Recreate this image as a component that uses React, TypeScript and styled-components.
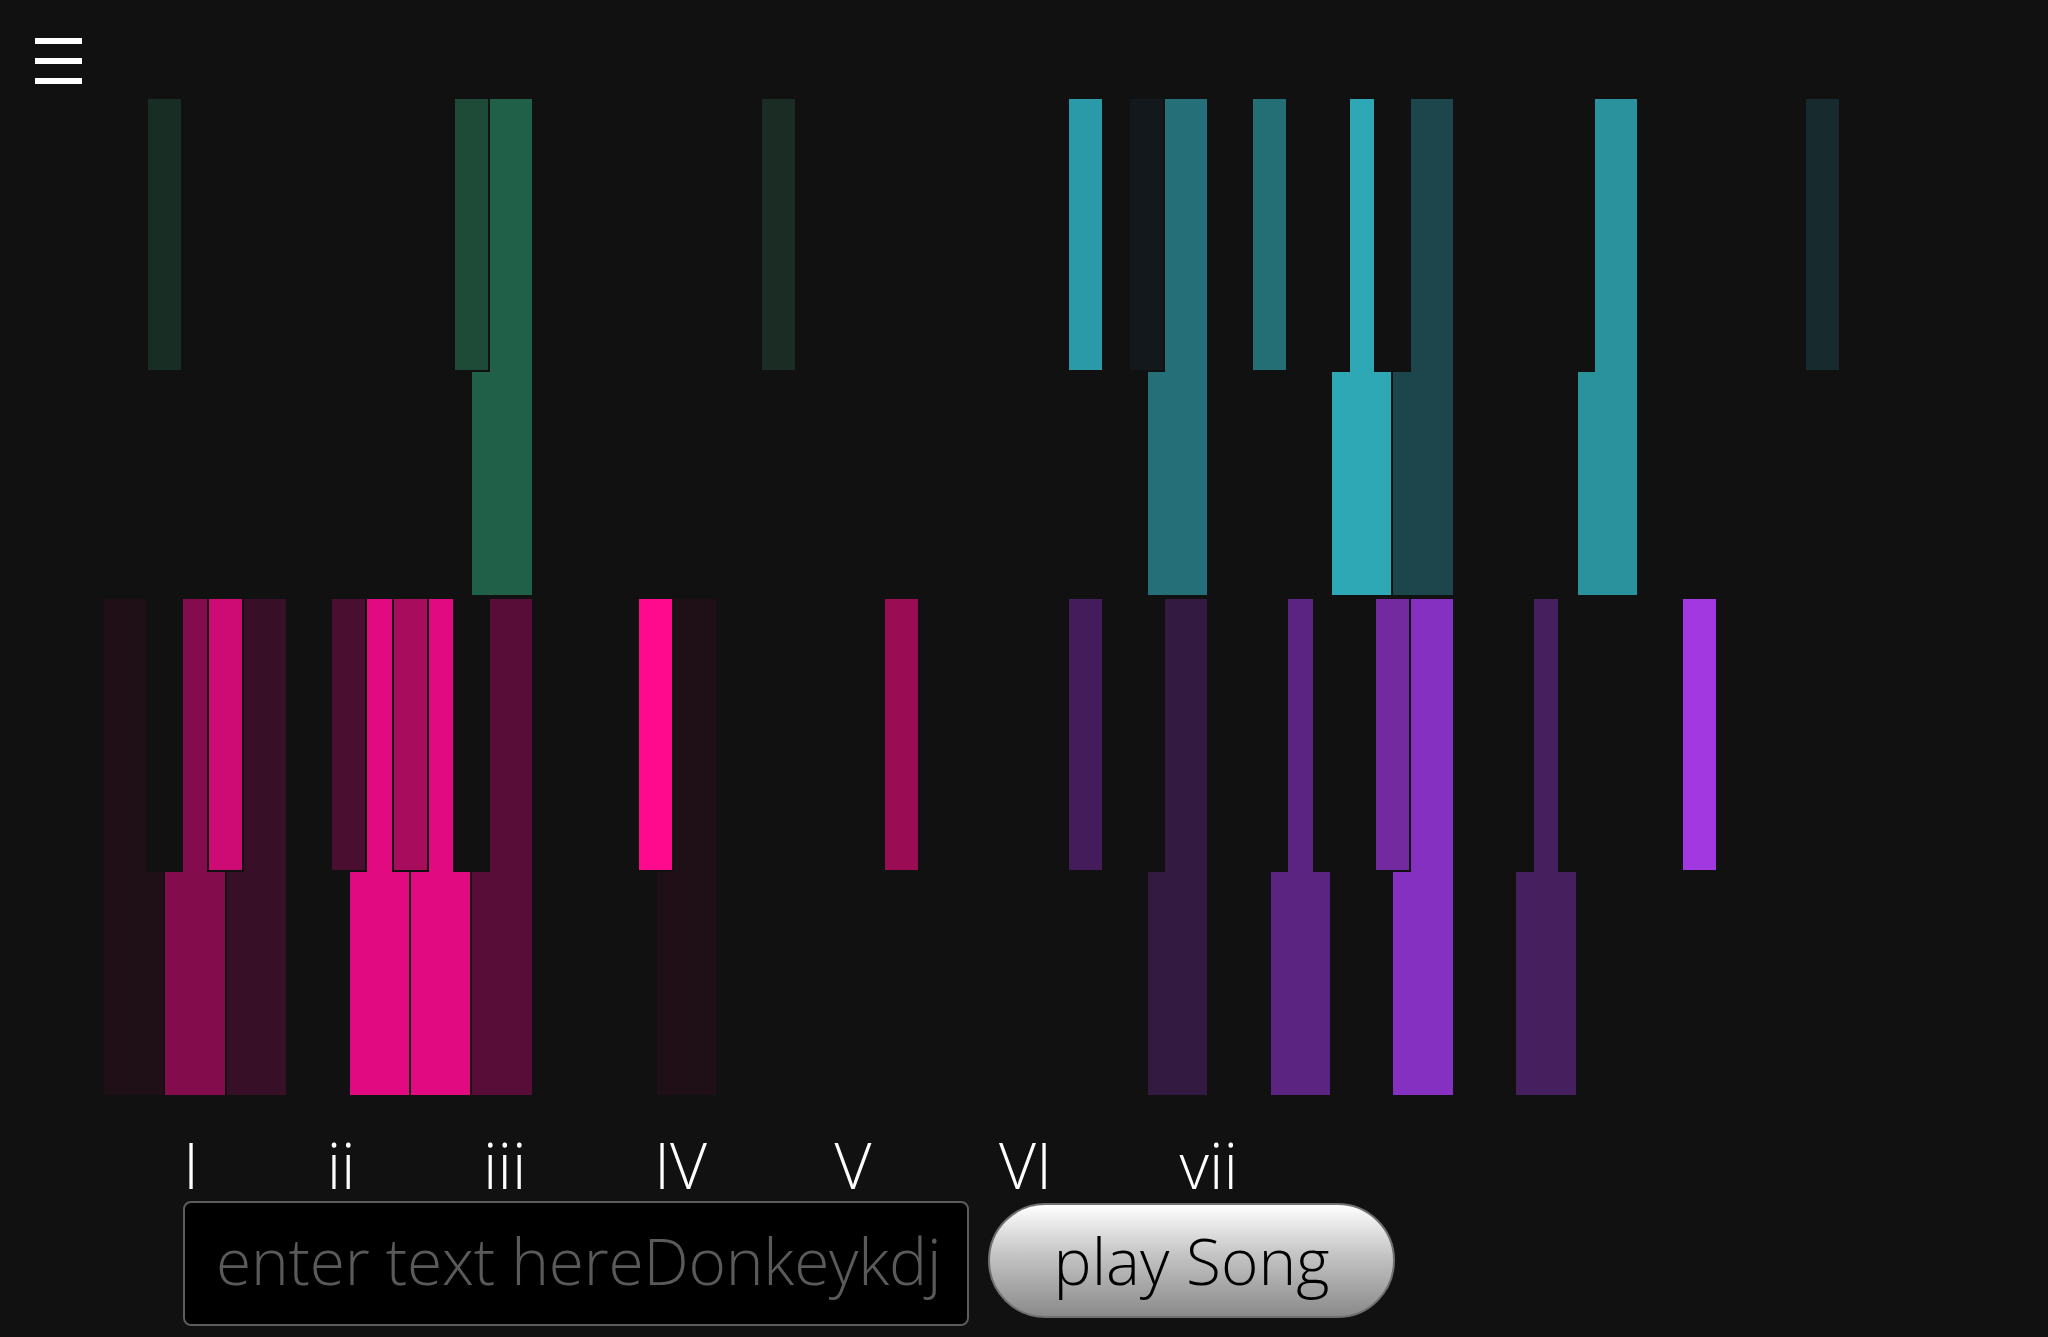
import React from "react";
import styled, { createGlobalStyle } from "styled-components";

//#region constants
const KEY_W = 61.4;
const WHITE_COUNT = 30;
const KEY_H = 496;
const BLACK_H = 271;
const BLACK_W = 33;
const BORDER = 2;
const BG = "#111111";

// boundaries between white keys that carry a black key
const BLACK_SLOTS = [
  1, 2, 4, 5, 6, 8, 9, 11, 12, 13, 16, 17, 19, 20, 21, 23, 24, 26, 27, 28,
];

const CHORDS = ["I", "ii", "iii", "IV", "V", "VI", "vii"];
//#endregion

//#region types
type KeyColors = Record<number, string>;

type KeyboardProps = {
  whites: KeyColors;
  blacks: KeyColors;
};
//#endregion

const TREBLE: KeyboardProps = {
  whites: {
    6: "#206048",
    17: "#257078",
    20: "#2fa8b5",
    21: "#1c454c",
    24: "#2a929c",
  },
  blacks: {
    1: "#182e25",
    6: "#1e4a38",
    11: "#1a2c24",
    16: "#2b9aa8",
    17: "#12181b",
    19: "#246e76",
    28: "#172a2e",
  },
};

const BASS: KeyboardProps = {
  whites: {
    0: "#1f1017",
    1: "#820c4c",
    2: "#370f26",
    4: "#e20a80",
    5: "#e20a80",
    6: "#580c38",
    9: "#1f1017",
    17: "#331a40",
    19: "#5a2480",
    21: "#8530c0",
    23: "#46205e",
  },
  blacks: {
    2: "#cc0c74",
    4: "#4a0f30",
    5: "#a80c5c",
    9: "#ff0a8c",
    13: "#9a0c54",
    16: "#441c5c",
    21: "#722a9e",
    26: "#a238e0",
  },
};

//#region Styles
const GlobalStyle = createGlobalStyle`
  html, body {
    margin: 0;
    background: ${BG};
  }
  body {
    font-family: "Open Sans", "Noto Sans", sans-serif;
    font-weight: 300;
    color: #ffffff;
  }
`;

const Page = styled.div`
  min-height: 100vh;
  display: flex;
  flex-direction: column;
`;

const Header = styled.header`
  height: 99px;
  box-sizing: border-box;
  padding: 38px 0 0 35px;
`;

const MenuButton = styled.button`
  display: flex;
  flex-direction: column;
  gap: 14px;
  width: 47px;
  padding: 0;
  border: 0;
  background: none;
  cursor: pointer;
`;

const MenuBar = styled.span`
  display: block;
  width: 47px;
  height: 6px;
  background: #ffffff;
`;

const Keyboards = styled.div`
  display: flex;
  flex-direction: column;
  gap: 4px;
  padding-left: 103px;
`;

const KeyboardSvg = styled.svg`
  display: block;
  shape-rendering: crispEdges;
`;

const Controls = styled.div`
  margin: 38px 0 0 183px;
`;

const ChordRow = styled.div`
  display: flex;
  gap: 127.5px;
  font-size: 64px;
  line-height: 64px;
`;

const Chord = styled.span`
  cursor: pointer;
`;

const InputRow = styled.div`
  display: flex;
  align-items: flex-start;
  gap: 19px;
  margin-top: 4px;
`;

const SongInput = styled.input`
  box-sizing: border-box;
  width: 786px;
  height: 125px;
  padding: 0 0 6px 31px;
  border: 2px solid #5c5c5c;
  border-radius: 8px;
  background: #000000;
  color: #5a5a5a;
  font-family: inherit;
  font-weight: 300;
  font-size: 64px;
  letter-spacing: -0.2px;
  outline: none;
`;

const PlayButton = styled.button`
  box-sizing: border-box;
  width: 407px;
  height: 115px;
  margin-top: 2px;
  padding: 0;
  border: 2px solid #707070;
  border-radius: 58px;
  background: linear-gradient(#ffffff 0%, #c4c4c4 45%, #8a8a8a 100%);
  color: #000000;
  font-family: inherit;
  font-weight: 300;
  font-size: 64px;
  cursor: pointer;
`;
//#endregion

//#region components
const Keyboard = ({ whites, blacks }: KeyboardProps) => {
  const width = WHITE_COUNT * KEY_W;
  return (
    <KeyboardSvg width={width} height={KEY_H} viewBox={`0 0 ${width} ${KEY_H}`}>
      {Object.entries(whites).map(([i, color]) => (
        <rect
          key={`w${i}`}
          x={Number(i) * KEY_W + 1}
          y={0}
          width={KEY_W - 2}
          height={KEY_H}
          fill={color}
        />
      ))}
      {BLACK_SLOTS.map((b) => {
        const cx = b * KEY_W;
        return (
          <g key={`b${b}`}>
            <rect
              x={cx - BLACK_W / 2 - BORDER}
              y={0}
              width={BLACK_W + BORDER * 2}
              height={BLACK_H + BORDER}
              fill={BG}
            />
            <rect
              x={cx - BLACK_W / 2}
              y={0}
              width={BLACK_W}
              height={BLACK_H}
              fill={blacks[b] ?? BG}
            />
          </g>
        );
      })}
    </KeyboardSvg>
  );
};

export default function App() {
  const [song, setSong] = React.useState("enter text hereDonkeykdj");

  return (
    <Page>
      <GlobalStyle />
      <Header>
        <MenuButton type="button" aria-label="menu">
          <MenuBar />
          <MenuBar />
          <MenuBar />
        </MenuButton>
      </Header>
      <Keyboards>
        <Keyboard {...TREBLE} />
        <Keyboard {...BASS} />
      </Keyboards>
      <Controls>
        <ChordRow>
          {CHORDS.map((c) => (
            <Chord key={c}>{c}</Chord>
          ))}
        </ChordRow>
        <InputRow>
          <SongInput value={song} onChange={(e) => setSong(e.target.value)} />
          <PlayButton type="button">play Song</PlayButton>
        </InputRow>
      </Controls>
    </Page>
  );
}
//#endregion
